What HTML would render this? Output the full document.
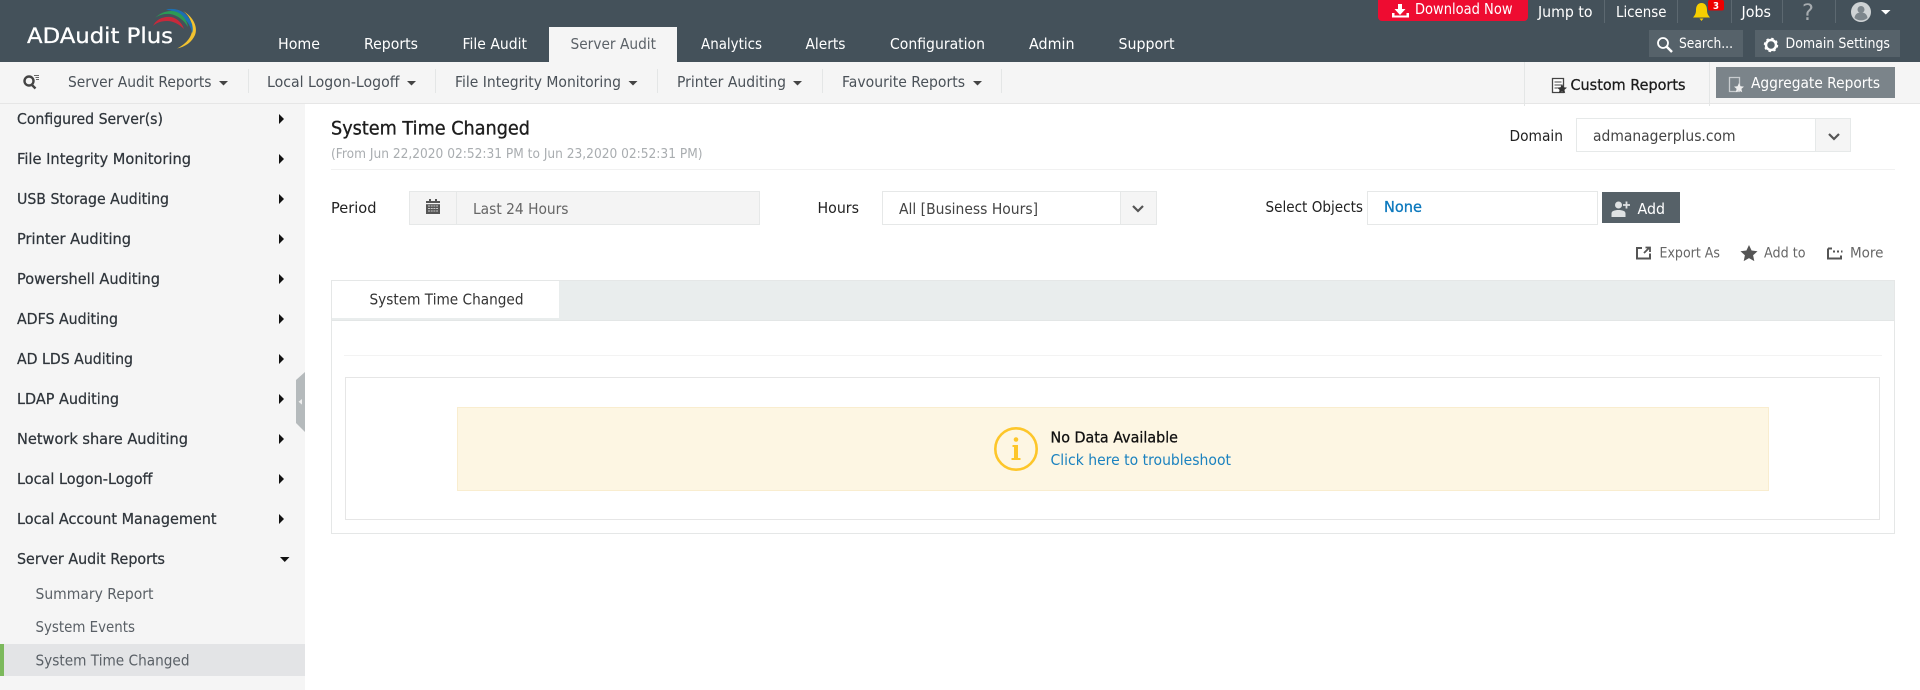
<!DOCTYPE html>
<html><head><meta charset="utf-8"><title>ADAudit Plus</title>
<style>
html,body{margin:0;padding:0;width:1920px;height:690px;overflow:hidden;background:#fff}
svg{display:block;position:absolute;left:0;top:0}
text{font-family:"DejaVu Sans","Liberation Sans",sans-serif;font-size:15px}
.nav text{fill:#fff;font-size:15.5px}
.sub text{fill:#4a5158;font-size:15px}
.side text{fill:#2f353b;font-size:15.5px;stroke:#2f353b;stroke-width:.25}
.side2 text{fill:#5a6066;font-size:15px}
.top text{fill:#fff;font-size:15px}
.act text{fill:#666;font-size:14px}
.lab text{fill:#222;font-size:15px}
</style></head><body>
<svg width="1920" height="690" viewBox="0 0 1920 690" xmlns="http://www.w3.org/2000/svg">
<!-- bars -->
<rect width="1920" height="62" fill="#44515a"/>
<rect y="62" width="1920" height="41" fill="#f5f5f5"/>
<rect y="103" width="1920" height="1" fill="#e6e6e6"/>
<rect y="104" width="305" height="586" fill="#f5f5f5"/>
<!-- logo -->
<text x="27" y="43" textLength="146" lengthAdjust="spacingAndGlyphs" style="font-size:21.5px;fill:#fff;stroke:#fff;stroke-width:.3">ADAudit Plus</text>
<path d="M183 11C194 17 198 28 195 35C192 42 185 47 177 48.5C184 45 191 39 192 31C193 23 189 15 183 11Z" fill="#f2c230"/>
<path d="M166 9.500C178 7 188 13 192 24C193 28 193 31 192 33C191 24 182 14 172 11C169 10 167 10 166 9.500Z" fill="#1d6fb2"/>
<path d="M155 18C162 11 172 9 179 13C184 16 187 21 188 27C184 20 177 15 170 14C164 13.500 159 15 155 18Z" fill="#2b9a55"/>
<path d="M153 26C156 19 164 16 171 17C177 18 182 23 184 29C179 24 173 21 167 21C161 21 156 23 153 26Z" fill="#c8293b"/>
<!-- main nav -->
<rect x="549" y="27" width="128" height="35" fill="#f5f5f5"/>
<g class="nav">
<text x="278" y="49" textLength="42" lengthAdjust="spacingAndGlyphs">Home</text>
<text x="364" y="49" textLength="54" lengthAdjust="spacingAndGlyphs">Reports</text>
<text x="462.500" y="49" textLength="64.500" lengthAdjust="spacingAndGlyphs">File Audit</text>
<text x="570.500" y="49" textLength="85.500" lengthAdjust="spacingAndGlyphs" style="fill:#5c6268">Server Audit</text>
<text x="701" y="49" textLength="61" lengthAdjust="spacingAndGlyphs">Analytics</text>
<text x="805.500" y="49" textLength="40" lengthAdjust="spacingAndGlyphs">Alerts</text>
<text x="890" y="49" textLength="95" lengthAdjust="spacingAndGlyphs">Configuration</text>
<text x="1029" y="49" textLength="45.500" lengthAdjust="spacingAndGlyphs">Admin</text>
<text x="1118.500" y="49" textLength="56" lengthAdjust="spacingAndGlyphs">Support</text>
</g>
<!-- top right -->
<path d="M1378 0H1528V17a4 4 0 0 1-4 4H1382a4 4 0 0 1-4-4Z" fill="#ee0c31"/>
<path d="M1398 4h4v5h3.500l-5.500 6-5.500-6h3.500ZM1392 13h2.500v2.500h12V13h2.500v4.500h-17Z" fill="#fff"/>
<rect x="1649" y="30" width="94" height="27" fill="#56626a"/>
<rect x="1755" y="30" width="145" height="27" fill="#56626a"/>
<g class="top">
<text x="1415" y="14" textLength="97.500" lengthAdjust="spacingAndGlyphs">Download Now</text>
<text x="1538" y="17" textLength="54.500" lengthAdjust="spacingAndGlyphs">Jump to</text>
<text x="1616" y="17" textLength="50.500" lengthAdjust="spacingAndGlyphs">License</text>
<text x="1741.500" y="17" textLength="29.500" lengthAdjust="spacingAndGlyphs">Jobs</text>
<text x="1679" y="48" textLength="54" lengthAdjust="spacingAndGlyphs" style="font-size:14.500px">Search...</text>
<text x="1785.500" y="48" textLength="104.500" lengthAdjust="spacingAndGlyphs" style="font-size:14.500px">Domain Settings</text>
<text x="1802" y="20" textLength="12" lengthAdjust="spacingAndGlyphs" style="font-size:22px;fill:#a6abaf">?</text>
</g>
<g fill="#5c6870">
<rect x="1604" y="0" width="1" height="23"/><rect x="1677" y="0" width="1" height="23"/>
<rect x="1731" y="0" width="1" height="23"/><rect x="1782" y="0" width="1" height="23"/>
<rect x="1835" y="0" width="1" height="23"/>
</g>
<path d="M1701.500 3c-4 0-5.500 3.500-5.500 7 0 3.500-1 5-3 7.500h17c-2-2.500-3-4-3-7.500 0-3.500-1.500-7-5.500-7ZM1699.500 18.500h4l-2 2.500Z" fill="#f7cf00"/>
<rect x="1708" y="0" width="16" height="10.500" rx="2" fill="#ee0000"/>
<text x="1713" y="9" textLength="6" lengthAdjust="spacingAndGlyphs" style="font-size:9.500px;fill:#fff;font-weight:bold">3</text>
<circle cx="1861" cy="12" r="10" fill="#cfd3d5"/>
<circle cx="1861" cy="9.500" r="3.500" fill="#7d868c"/>
<path d="M1854.500 18c.5-4 3-5.500 6.500-5.500s6 1.500 6.500 5.500a10 10 0 0 1-13 0Z" fill="#7d868c"/>
<path d="M1881 10h9.500l-4.750 4.500Z" fill="#fff"/>
<circle cx="1663" cy="43" r="5" fill="none" stroke="#fff" stroke-width="1.800"/>
<path d="M1666.500 46.500l5.500 5.500" stroke="#fff" stroke-width="2.500" fill="none"/>
<circle cx="1771" cy="45" r="5" fill="none" stroke="#fff" stroke-width="2.500"/>
<circle cx="1771" cy="45" r="6.300" fill="none" stroke="#fff" stroke-width="1.800" stroke-dasharray="2.400 2.550"/>
<!-- sub bar -->
<circle cx="29" cy="81" r="4.500" fill="none" stroke="#444" stroke-width="2.400"/>
<path d="M32 85l3.500 3.500" stroke="#444" stroke-width="2.400"/>
<path d="M34 75.500h5M35.500 77.500h3.500M36 79.500h3" stroke="#666" stroke-width="1"/>
<g class="sub">
<text x="68" y="87" textLength="143.500" lengthAdjust="spacingAndGlyphs">Server Audit Reports</text>
<text x="267" y="87" textLength="132.500" lengthAdjust="spacingAndGlyphs">Local Logon-Logoff</text>
<text x="455" y="87" textLength="166" lengthAdjust="spacingAndGlyphs">File Integrity Monitoring</text>
<text x="677" y="87" textLength="109" lengthAdjust="spacingAndGlyphs">Printer Auditing</text>
<text x="842" y="87" textLength="123" lengthAdjust="spacingAndGlyphs">Favourite Reports</text>
</g>
<g fill="#444">
<path d="M219 81h9l-4.500 4.500Z"/><path d="M407 81h9l-4.500 4.500Z"/><path d="M628.500 81h9l-4.500 4.500Z"/><path d="M793 81h9l-4.500 4.500Z"/><path d="M973 81h9l-4.500 4.500Z"/>
</g>
<g fill="#e4e6e6">
<rect x="248" y="69" width="1" height="24"/><rect x="435" y="69" width="1" height="24"/><rect x="657" y="69" width="1" height="24"/>
<rect x="822" y="69" width="1" height="24"/><rect x="1001" y="69" width="1" height="24"/>
<rect x="1524" y="62" width="1" height="44"/><rect x="1709" y="62" width="1" height="44"/>
</g>
<path d="M1552.500 78.500h11v14h-11Z" fill="#fff" stroke="#444" stroke-width="1.300"/>
<path d="M1554.500 82h7M1554.500 85h7M1554.500 88h3" stroke="#444" stroke-width="1"/>
<path d="M1562 84l1.500 3.200 3.500.4-2.600 2.300.8 3.400-3.200-1.800-3.200 1.800.8-3.400-2.600-2.300 3.500-.4Z" fill="#333"/>
<text x="1570.500" y="90" textLength="115" lengthAdjust="spacingAndGlyphs" style="fill:#1c1c1c;font-size:15.500px;stroke:#1c1c1c;stroke-width:.3">Custom Reports</text>
<rect x="1716" y="67" width="179" height="31" fill="#7b848a"/>
<path d="M1729.500 77.500h10v14h-10Z" fill="none" stroke="#c8cccf" stroke-width="1.300"/>
<path d="M1739 83l1.500 3.200 3.500.4-2.600 2.300.8 3.400-3.200-1.800-3.200 1.800.8-3.400-2.600-2.300 3.500-.4Z" fill="#eee"/>
<text x="1751" y="88" textLength="129" lengthAdjust="spacingAndGlyphs" style="fill:#fff;font-size:15.500px">Aggregate Reports</text>
<!-- sidebar -->
<g class="side">
<text x="17" y="124" textLength="146" lengthAdjust="spacingAndGlyphs">Configured Server(s)</text>
<text x="17" y="164" textLength="174" lengthAdjust="spacingAndGlyphs">File Integrity Monitoring</text>
<text x="17" y="204" textLength="152" lengthAdjust="spacingAndGlyphs">USB Storage Auditing</text>
<text x="17" y="244" textLength="114" lengthAdjust="spacingAndGlyphs">Printer Auditing</text>
<text x="17" y="284" textLength="143" lengthAdjust="spacingAndGlyphs">Powershell Auditing</text>
<text x="17" y="324" textLength="101" lengthAdjust="spacingAndGlyphs">ADFS Auditing</text>
<text x="17" y="364" textLength="116" lengthAdjust="spacingAndGlyphs">AD LDS Auditing</text>
<text x="17" y="404" textLength="102" lengthAdjust="spacingAndGlyphs">LDAP Auditing</text>
<text x="17" y="444" textLength="171" lengthAdjust="spacingAndGlyphs">Network share Auditing</text>
<text x="17" y="484" textLength="135.500" lengthAdjust="spacingAndGlyphs">Local Logon-Logoff</text>
<text x="17" y="524" textLength="199.500" lengthAdjust="spacingAndGlyphs">Local Account Management</text>
<text x="17" y="564" textLength="148" lengthAdjust="spacingAndGlyphs">Server Audit Reports</text>
</g>
<g fill="#111">
<path d="M279 114l5 5-5 5Z"/><path d="M279 154l5 5-5 5Z"/><path d="M279 194l5 5-5 5Z"/><path d="M279 234l5 5-5 5Z"/>
<path d="M279 274l5 5-5 5Z"/><path d="M279 314l5 5-5 5Z"/><path d="M279 354l5 5-5 5Z"/><path d="M279 394l5 5-5 5Z"/>
<path d="M279 434l5 5-5 5Z"/><path d="M279 474l5 5-5 5Z"/><path d="M279 514l5 5-5 5Z"/><path d="M280 557h9.500l-4.750 5Z"/>
</g>
<rect x="0" y="644" width="305" height="32" fill="#e3e4e6"/>
<rect x="0" y="644" width="4" height="32" fill="#7cb95c"/>
<g class="side2">
<text x="35.500" y="599" textLength="118" lengthAdjust="spacingAndGlyphs">Summary Report</text>
<text x="35.500" y="632" textLength="99.500" lengthAdjust="spacingAndGlyphs">System Events</text>
<text x="35.500" y="665.500" textLength="154" lengthAdjust="spacingAndGlyphs">System Time Changed</text>
</g>
<path d="M305 372L296 380V423L305 432Z" fill="#b5babc"/>
<path d="M302 399l-3.500 2.800 3.500 2.800Z" fill="#eee"/>
<!-- header -->
<text x="331" y="134.500" textLength="199" lengthAdjust="spacingAndGlyphs" style="fill:#1d1d1d;font-size:19px;stroke:#1d1d1d;stroke-width:.35">System Time Changed</text>
<text x="331" y="158" textLength="371.500" lengthAdjust="spacingAndGlyphs" style="fill:#a9adb0;font-size:13px">(From Jun 22,2020 02:52:31 PM to Jun 23,2020 02:52:31 PM)</text>
<rect x="331" y="169" width="1564" height="1" fill="#f1f1f1"/>
<g class="lab">
<text x="1509.500" y="141" textLength="53.500" lengthAdjust="spacingAndGlyphs">Domain</text>
<text x="331" y="213" textLength="45.500" lengthAdjust="spacingAndGlyphs">Period</text>
<text x="817.500" y="213" textLength="41.500" lengthAdjust="spacingAndGlyphs">Hours</text>
<text x="1265.500" y="212" textLength="97.500" lengthAdjust="spacingAndGlyphs">Select Objects</text>
</g>
<!-- domain -->
<rect x="1576.500" y="118.500" width="274" height="33" fill="#fff" stroke="#e6e9e9"/>
<rect x="1815" y="119" width="35" height="32" fill="#f5f5f5"/><rect x="1815" y="119" width="1" height="32" fill="#e6e9e9"/>
<path d="M1829 134l5 5 5-5" fill="none" stroke="#555" stroke-width="2.200"/>
<text x="1593" y="141" textLength="142.500" lengthAdjust="spacingAndGlyphs" style="fill:#444;font-size:15px">admanagerplus.com</text>
<!-- period -->
<rect x="409.500" y="191.500" width="350" height="33" fill="#f4f4f4" stroke="#e6e8e8"/>
<rect x="456" y="192" width="1" height="32" fill="#e6e8e8"/>
<path d="M426 201h14v13h-14Z" fill="#555"/><rect x="426" y="203" width="14" height="1.200" fill="#f4f4f4"/>
<path d="M429 199h2v3h-2ZM435 199h2v3h-2Z" fill="#555"/>
<path d="M428 206h10M428 208.500h10M428 211h10" stroke="#f4f4f4" stroke-width=".8" stroke-dasharray="2 .7"/>
<text x="473" y="214" textLength="95.500" lengthAdjust="spacingAndGlyphs" style="fill:#666;font-size:15px">Last 24 Hours</text>
<!-- hours -->
<rect x="882.500" y="191.500" width="274" height="33" fill="#fff" stroke="#e6e8e8"/>
<rect x="1120" y="192" width="36" height="32" fill="#f5f5f5"/><rect x="1120" y="192" width="1" height="32" fill="#e6e8e8"/>
<path d="M1133 206l5 5 5-5" fill="none" stroke="#555" stroke-width="2.200"/>
<text x="899" y="214" textLength="139" lengthAdjust="spacingAndGlyphs" style="fill:#444;font-size:15px">All [Business Hours]</text>
<!-- objects -->
<rect x="1367.500" y="191.500" width="230" height="33" fill="#fff" stroke="#e6e8e8"/>
<text x="1384" y="212" textLength="38" lengthAdjust="spacingAndGlyphs" style="fill:#0b78bd;font-size:15px;stroke:#0b78bd;stroke-width:.3">None</text>
<rect x="1602" y="192" width="78" height="31" fill="#566168"/>
<circle cx="1618.500" cy="205" r="3.500" fill="#dfe2e3"/>
<path d="M1611.500 217v-3.500c0-2.500 3-3.500 7-3.500s7 1 7 3.500v3.500Z" fill="#dfe2e3"/>
<path d="M1623 205h7M1626.500 201.500v7" stroke="#dfe2e3" stroke-width="1.800"/>
<text x="1637.500" y="214" textLength="27.500" lengthAdjust="spacingAndGlyphs" style="fill:#fff;font-size:15px">Add</text>
<!-- actions -->
<path d="M1642 248h-5v10.500h13v-5" fill="none" stroke="#555" stroke-width="2"/>
<path d="M1644 253l5-5M1645.500 247.500h4.500v4.500" fill="none" stroke="#555" stroke-width="1.800"/>
<path d="M1749 245l2.600 5.500 5.900.7-4.400 4.100 1.200 5.800-5.300-3-5.300 3 1.200-5.800-4.400-4.100 5.900-.7Z" fill="#555"/>
<path d="M1828 248.500v10h13v-3M1828 248.500h4" fill="none" stroke="#555" stroke-width="2"/>
<path d="M1833 251.500h2M1837 251.500h2M1841 251.500h1.500" stroke="#555" stroke-width="2"/>
<g class="act">
<text x="1659.500" y="257.500" textLength="60.500" lengthAdjust="spacingAndGlyphs">Export As</text>
<text x="1764" y="257.500" textLength="41.500" lengthAdjust="spacingAndGlyphs">Add to</text>
<text x="1850" y="257.500" textLength="33.500" lengthAdjust="spacingAndGlyphs">More</text>
</g>
<!-- tabs panel -->
<rect x="331.500" y="280.500" width="1563" height="253" fill="#fff" stroke="#e5e7e7"/>
<rect x="332" y="281" width="1562" height="39" fill="#e9eded"/>
<rect x="332" y="320" width="1562" height="1" fill="#e3e6e6"/>
<rect x="332" y="281" width="227" height="37" fill="#fff"/>
<text x="369.500" y="304.500" textLength="154" lengthAdjust="spacingAndGlyphs" style="fill:#333;font-size:15px">System Time Changed</text>
<rect x="344" y="355" width="1538" height="1" fill="#f3f3f3"/>
<rect x="345.500" y="377.500" width="1534" height="142" fill="#fff" stroke="#e6e6e6"/>
<rect x="457.500" y="407.500" width="1311" height="83" fill="#fdf6e3" stroke="#f9edcf"/>
<circle cx="1016" cy="449" r="20.700" fill="none" stroke="#fdc62a" stroke-width="2.600"/>
<circle cx="1016" cy="439.500" r="2.300" fill="#fdc62a"/>
<path d="M1012.500 445h5.500v13h2.500v2h-9v-2h2.500v-11h-1.500Z" fill="#fdc62a"/>
<text x="1050.500" y="442.500" textLength="127.500" lengthAdjust="spacingAndGlyphs" style="fill:#111;font-size:15px;stroke:#111;stroke-width:.3">No Data Available</text>
<text x="1050.500" y="465" textLength="180.500" lengthAdjust="spacingAndGlyphs" style="fill:#1b82bf;font-size:15px">Click here to troubleshoot</text>
</svg>
</body></html>
